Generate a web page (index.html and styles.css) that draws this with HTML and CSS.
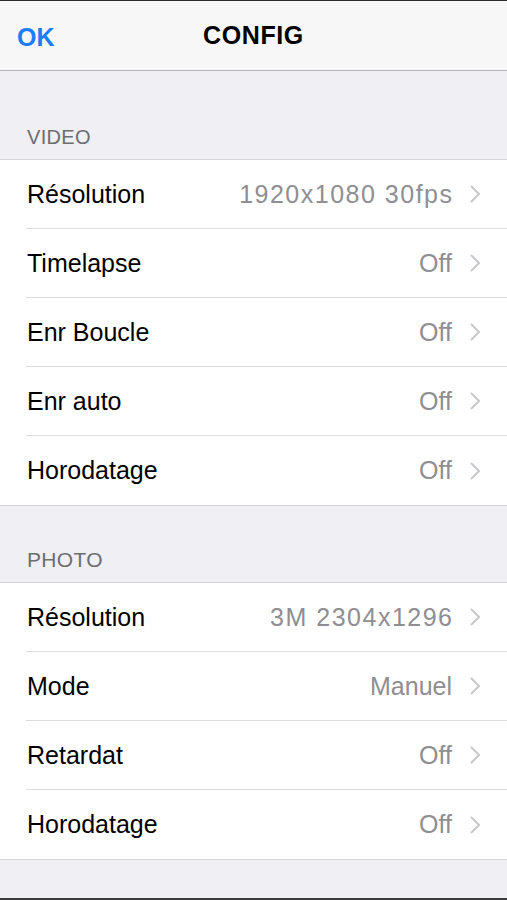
FILE: index.html
```html
<!DOCTYPE html>
<html lang="fr">
<head>
  <meta charset="UTF-8" />
  <meta name="viewport" content="width=device-width, initial-scale=1.0" />
  <title>Config</title>
  <link rel="stylesheet" href="styles.css">
</head>
<body>
  <div class="screen">
    <div class="navbar">
      <span class="nav-ok">OK</span>
      <span class="nav-title">CONFIG</span>
    </div>

    <div class="section-header video-header">VIDEO</div>
    <div class="group">
      <div class="row"><div class="row-inner"><span class="label">Résolution</span><span class="value digits">1920x1080 30fps</span><svg class="chevron" viewBox="0 0 12 20"><path d="M2 2 L10 10 L2 18" /></svg></div></div>
      <div class="row"><div class="row-inner"><span class="label">Timelapse</span><span class="value">Off</span><svg class="chevron" viewBox="0 0 12 20"><path d="M2 2 L10 10 L2 18" /></svg></div></div>
      <div class="row"><div class="row-inner"><span class="label">Enr Boucle</span><span class="value">Off</span><svg class="chevron" viewBox="0 0 12 20"><path d="M2 2 L10 10 L2 18" /></svg></div></div>
      <div class="row"><div class="row-inner"><span class="label">Enr auto</span><span class="value">Off</span><svg class="chevron" viewBox="0 0 12 20"><path d="M2 2 L10 10 L2 18" /></svg></div></div>
      <div class="row"><div class="row-inner"><span class="label">Horodatage</span><span class="value">Off</span><svg class="chevron" viewBox="0 0 12 20"><path d="M2 2 L10 10 L2 18" /></svg></div></div>
    </div>

    <div class="section-header photo-header">PHOTO</div>
    <div class="group">
      <div class="row"><div class="row-inner"><span class="label">Résolution</span><span class="value digits">3M 2304x1296</span><svg class="chevron" viewBox="0 0 12 20"><path d="M2 2 L10 10 L2 18" /></svg></div></div>
      <div class="row"><div class="row-inner"><span class="label">Mode</span><span class="value">Manuel</span><svg class="chevron" viewBox="0 0 12 20"><path d="M2 2 L10 10 L2 18" /></svg></div></div>
      <div class="row"><div class="row-inner"><span class="label">Retardat</span><span class="value">Off</span><svg class="chevron" viewBox="0 0 12 20"><path d="M2 2 L10 10 L2 18" /></svg></div></div>
      <div class="row"><div class="row-inner"><span class="label">Horodatage</span><span class="value">Off</span><svg class="chevron" viewBox="0 0 12 20"><path d="M2 2 L10 10 L2 18" /></svg></div></div>
    </div>

    <div class="footer-space"></div>
  </div>
</body>
</html>
```

FILE: styles.css
```css
html, body {
  margin: 0;
  padding: 0;
}
body {
  font-family: "Liberation Sans", Arial, sans-serif;
  background: #efeff4;
}
.screen {
  width: 507px;
  height: 900px;
  box-sizing: border-box;
  border-top: 1px solid #2e2e2e;
  border-bottom: 2px solid #3a3a3a;
  background: #efeff4;
  display: flex;
  flex-direction: column;
}
.navbar {
  height: 69px;
  flex-shrink: 0;
  background: #f7f7f8;
  border-bottom: 1px solid #b2b2b6;
  display: flex;
  align-items: center;
  justify-content: center;
  position: relative;
}
.nav-ok {
  position: absolute;
  left: 17px;
  top: 22px;
  font-size: 25px;
  font-weight: bold;
  color: #1b7ef6;
}
.nav-title {
  font-size: 25px;
  font-weight: bold;
  color: #000;
  letter-spacing: 0.6px;
}
.section-header {
  flex-shrink: 0;
  box-sizing: border-box;
  display: flex;
  align-items: flex-end;
  padding: 0 27px 10px;
  font-size: 20px;
  color: #6d6d72;
  letter-spacing: 0.3px;
}
.video-header {
  height: 88px;
}
.photo-header {
  height: 76px;
  font-size: 21px;
}
.group {
  flex-shrink: 0;
  background: #fff;
  border-top: 1px solid #d6d6da;
  border-bottom: 1px solid #d6d6da;
}
.row {
  height: 69px;
  padding-left: 26px;
  box-sizing: border-box;
}
.row-inner {
  height: 100%;
  box-sizing: border-box;
  display: flex;
  align-items: center;
  padding-right: 26px;
  border-bottom: 1px solid #dcdce0;
}
.row:last-child .row-inner {
  border-bottom: none;
}
.label {
  flex: 1;
  padding-left: 1px;
  font-size: 25px;
  color: #000;
}
.value {
  font-size: 25px;
  color: #8e8e93;
  margin-right: 17px;
}
.value.digits {
  letter-spacing: 1.5px;
  margin-right: 15.5px;
}
.chevron {
  width: 12px;
  height: 20px;
  fill: none;
  stroke: #c7c7cc;
  stroke-width: 2;
}
.footer-space {
  flex: 1;
}
```
